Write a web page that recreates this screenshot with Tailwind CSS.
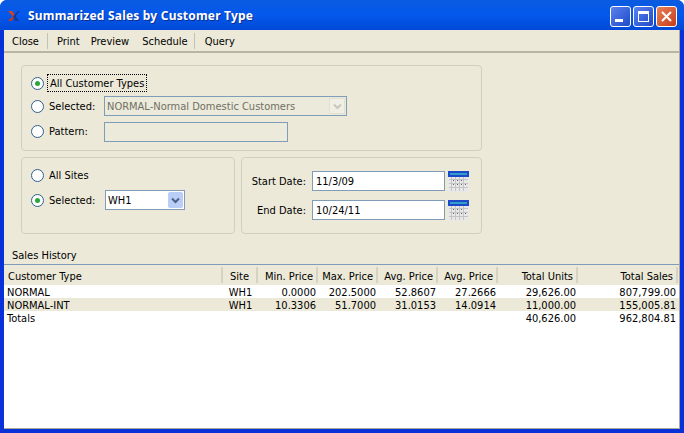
<!DOCTYPE html>
<html lang="en">
<head>
  <meta charset="UTF-8" />
  <title>Summarized Sales by Customer Type</title>
  <script src="https://cdn.jsdelivr.net/npm/@tailwindcss/browser@4"></script>
</head>
<body class="w-[684px] h-[433px] overflow-hidden bg-white font-['DejaVu_Sans_Condensed','Roboto',sans-serif] text-[11px] leading-[13px] text-black">
  <div class="h-[433px] flex flex-col rounded-t-[7px] overflow-hidden bg-[#0831d9]">
    <!-- title bar -->
    <div class="h-[30px] shrink-0 flex items-center pl-[7px] pr-[7px] bg-gradient-to-b from-[#0a5be0] via-[#0458ec] to-[#0249d6]">
      <svg class="w-[14px] h-[12px] mt-[1px]" viewBox="0 0 14 12">
        <path d="M1 1h4l2.500 3.500L6 6.500z" fill="#d8431c"/>
        <path d="M1 11l5-5 1.500 1.500L4.500 11z" fill="#c23a1c"/>
        <path d="M7.500 4.500L11 1h2L8.500 6 12 11H8L6 6.500z" fill="#123a9c"/>
      </svg>
      <span class="ml-[7px] font-['Noto_Sans',sans-serif] text-[12px] font-bold text-white tracking-[0.2px] [text-shadow:1px_1px_0_#0b2f8f]">Summarized Sales by Customer Type</span>
      <div class="ml-auto flex gap-[2px] mt-[3px]">
        <div class="w-[21px] h-[21px] rounded-[3px] border border-white bg-gradient-to-br from-[#5a83ee] to-[#2048c8] flex items-end pl-[4px] pb-[4px]">
          <div class="w-[8px] h-[3px] bg-white"></div>
        </div>
        <div class="w-[21px] h-[21px] rounded-[3px] border border-white bg-gradient-to-br from-[#5a83ee] to-[#2048c8] flex items-center justify-center">
          <div class="w-[11px] h-[11px] border border-white border-t-[3px]"></div>
        </div>
        <div class="w-[21px] h-[21px] rounded-[3px] border border-white bg-gradient-to-br from-[#e8805a] to-[#c73a10] flex items-center justify-center">
          <svg class="w-[11px] h-[11px]" viewBox="0 0 11 11"><path d="M1 1l9 9M10 1l-9 9" stroke="#fff" stroke-width="2"/></svg>
        </div>
      </div>
    </div>

    <!-- window body -->
    <div class="flex-1 mx-[4px] mb-[4px] flex flex-col bg-[#ece9d8] border-r border-b border-[#aca899]">
      <!-- toolbar -->
      <div class="h-[23px] shrink-0 flex items-center border-b-2 border-[#aca899]/80">
        <span class="ml-[8px] mt-[2px]">Close</span>
        <div class="ml-[8px] w-px h-[16px] bg-[#c5c2b2]"></div>
        <span class="ml-[9px] mt-[2px]">Print</span>
        <span class="ml-[11px] mt-[2px]">Preview</span>
        <span class="ml-[13px] mt-[2px]">Schedule</span>
        <div class="ml-[6px] w-px h-[16px] bg-[#c5c2b2]"></div>
        <span class="ml-[10px] mt-[2px]">Query</span>
      </div>

      <!-- parameters -->
      <div class="pt-[12px] pl-[17px] flex flex-col gap-[6px] w-[478px]">
        <div class="h-[86px] border border-[#d0d0bf] rounded-[4px] pl-[9px] pt-[8px]">
          <div class="h-[18px] flex items-center">
            <div class="w-[13px] h-[13px] rounded-full bg-white border border-[#2f5f8f] flex items-center justify-center"><div class="w-[5px] h-[5px] rounded-full bg-[#28a83c]"></div></div>
            <span class="ml-[3px] px-[2px] h-[18px] flex items-center border border-dotted border-black">All Customer Types</span>
          </div>
          <div class="mt-[4px] h-[20px] flex items-center">
            <div class="w-[13px] h-[13px] rounded-full bg-white border border-[#2f5f8f]"></div>
            <span class="ml-[5px] w-[55px]">Selected:</span>
            <div class="w-[243px] h-[20px] border border-[#7f9db9] bg-[#ebeadb] flex items-center pl-[2px] text-[#716f64]">
              <span>NORMAL-Normal Domestic Customers</span>
              <div class="ml-auto mr-px w-[16px] h-[16px] bg-[#f0efe6] border border-[#e0dfd2] flex items-center justify-center">
                <svg class="w-[9px] h-[7px]" viewBox="0 0 9 7"><path d="M1 1.500l3.500 3.500L8 1.500" fill="none" stroke="#c9c7ba" stroke-width="2"/></svg>
              </div>
            </div>
          </div>
          <div class="mt-[5px] h-[21px] flex items-center">
            <div class="w-[13px] h-[13px] rounded-full bg-white border border-[#2f5f8f]"></div>
            <span class="ml-[5px] w-[55px]">Pattern:</span>
            <div class="w-[184px] h-[20px] border border-[#7f9db9] bg-[#ebeadb]"></div>
          </div>
        </div>

        <div class="flex gap-[6px]">
          <div class="w-[214px] h-[77px] border border-[#d0d0bf] rounded-[4px] pl-[9px] pt-[9px]">
            <div class="h-[16px] flex items-center">
              <div class="w-[13px] h-[13px] rounded-full bg-white border border-[#2f5f8f]"></div>
              <span class="ml-[5px]">All Sites</span>
            </div>
            <div class="mt-[7px] h-[20px] flex items-center">
              <div class="w-[13px] h-[13px] rounded-full bg-white border border-[#2f5f8f] flex items-center justify-center"><div class="w-[5px] h-[5px] rounded-full bg-[#28a83c]"></div></div>
              <span class="ml-[5px] w-[56px]">Selected:</span>
              <div class="w-[80px] h-[20px] border border-[#7f9db9] bg-white flex items-center pl-[2px]">
                <span>WH1</span>
                <div class="ml-auto mr-px w-[15px] h-[16px] rounded-[2px] bg-[#b9cdf6] flex items-center justify-center">
                  <svg class="w-[9px] h-[7px]" viewBox="0 0 9 7"><path d="M1 1.500l3.500 3.500L8 1.500" fill="none" stroke="#4d6185" stroke-width="2"/></svg>
                </div>
              </div>
            </div>
          </div>

          <div class="w-[241px] h-[77px] border border-[#d0d0bf] rounded-[4px] pt-[13px] flex flex-col gap-[9px]">
            <div class="h-[20px] flex items-center">
              <span class="w-[64px] text-right">Start Date:</span>
              <div class="ml-[6px] w-[133px] h-[20px] border border-[#7f9db9] bg-white flex items-center pl-[3px]">11/3/09</div>
              <svg class="ml-[3px] w-[21px] h-[21px]" viewBox="0 0 21 21">
                <rect width="21" height="21" fill="#e8e8e8"/>
                <rect x="0" y="0" width="21" height="6" fill="#1f47c9"/>
                <rect x="2" y="2" width="17" height="2" fill="#2ea0c8"/>
                <path d="M1 8.500h19M1 12.500h19M1 16.500h19M3.500 6v14M7.500 6v14M11.500 6v14M15.500 6v14" stroke="#c4c4c4"/>
                <path d="M5 9.500h1M9 9.500h1M13 9.500h1M5 13.500h1M9 13.500h1M13 13.500h1M17 13.500h1" stroke="#666"/>
              </svg>
            </div>
            <div class="h-[20px] flex items-center">
              <span class="w-[64px] text-right">End Date:</span>
              <div class="ml-[6px] w-[133px] h-[20px] border border-[#7f9db9] bg-white flex items-center pl-[3px]">10/24/11</div>
              <svg class="ml-[3px] w-[21px] h-[21px]" viewBox="0 0 21 21">
                <rect width="21" height="21" fill="#e8e8e8"/>
                <rect x="0" y="0" width="21" height="6" fill="#1f47c9"/>
                <rect x="2" y="2" width="17" height="2" fill="#2ea0c8"/>
                <path d="M1 8.500h19M1 12.500h19M1 16.500h19M3.500 6v14M7.500 6v14M11.500 6v14M15.500 6v14" stroke="#c4c4c4"/>
                <path d="M5 9.500h1M9 9.500h1M13 9.500h1M5 13.500h1M9 13.500h1M13 13.500h1M17 13.500h1" stroke="#666"/>
              </svg>
            </div>
          </div>
        </div>
      </div>

      <!-- sales history -->
      <div class="mt-[14px] pl-[8px] pt-[1px] h-[16px] shrink-0">Sales History</div>
      <div class="flex-1 bg-white border-t border-[#7f9db9]">
        <div class="h-[20px] bg-[#ece9d8] grid grid-cols-[219px_35px_60px_60px_60px_60px_80px_100px] items-center">
          <div class="h-[16px] flex items-center pt-[2px] pl-[4px] border-r-2 border-[#d6d3c2]">Customer Type</div>
          <div class="h-[16px] flex items-center pt-[2px] justify-center border-r-2 border-[#d6d3c2]">Site</div>
          <div class="h-[16px] flex items-center pt-[2px] justify-end pr-[3px] border-r-2 border-[#d6d3c2]">Min. Price</div>
          <div class="h-[16px] flex items-center pt-[2px] justify-end pr-[3px] border-r-2 border-[#d6d3c2]">Max. Price</div>
          <div class="h-[16px] flex items-center pt-[2px] justify-end pr-[3px] border-r-2 border-[#d6d3c2]">Avg. Price</div>
          <div class="h-[16px] flex items-center pt-[2px] justify-end pr-[3px] border-r-2 border-[#d6d3c2]">Avg. Price</div>
          <div class="h-[16px] flex items-center pt-[2px] justify-end pr-[3px] border-r-2 border-[#d6d3c2]">Total Units</div>
          <div class="h-[16px] flex items-center pt-[2px] justify-end pr-[3px] border-r-2 border-[#d6d3c2]">Total Sales</div>
        </div>
        <div class="h-[13px] pt-[1px] grid grid-cols-[219px_35px_60px_60px_60px_60px_80px_100px] items-start">
          <div class="pl-[3px]">NORMAL</div><div class="text-center">WH1</div>
          <div class="text-right pr-[2px]">0.0000</div><div class="text-right pr-[2px]">202.5000</div><div class="text-right pr-[2px]">52.8607</div><div class="text-right pr-[2px]">27.2666</div><div class="text-right pr-[2px]">29,626.00</div><div class="text-right pr-[2px]">807,799.00</div>
        </div>
        <div class="h-[13px] pt-[1px] bg-[#ece9d8] grid grid-cols-[219px_35px_60px_60px_60px_60px_80px_100px] items-start">
          <div class="pl-[3px]">NORMAL-INT</div><div class="text-center">WH1</div>
          <div class="text-right pr-[2px]">10.3306</div><div class="text-right pr-[2px]">51.7000</div><div class="text-right pr-[2px]">31.0153</div><div class="text-right pr-[2px]">14.0914</div><div class="text-right pr-[2px]">11,000.00</div><div class="text-right pr-[2px]">155,005.81</div>
        </div>
        <div class="h-[13px] pt-[1px] grid grid-cols-[219px_35px_60px_60px_60px_60px_80px_100px] items-start">
          <div class="pl-[3px]">Totals</div><div></div><div></div><div></div><div></div><div></div>
          <div class="text-right pr-[2px]">40,626.00</div><div class="text-right pr-[2px]">962,804.81</div>
        </div>
      </div>
    </div>
  </div>
</body>
</html>
